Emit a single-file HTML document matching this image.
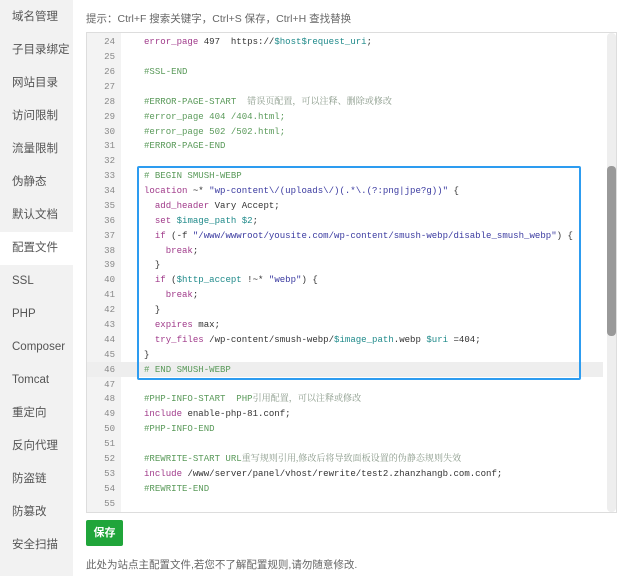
<!DOCTYPE html>
<html><head><meta charset="utf-8"><style>
*{margin:0;padding:0;box-sizing:border-box}
body{width:627px;height:576px;background:#fff;position:relative;overflow:hidden;font-family:"Liberation Sans","Noto Sans CJK SC",sans-serif;}
.side{position:absolute;left:0;top:0;width:73px;height:576px;background:#f2f2f2}
.side div{position:absolute;left:0;width:73px;height:33px;line-height:33px;padding-left:12px;font-size:11.5px;color:#555}
.side div.act{background:#fff}
.tip{position:absolute;left:86px;top:11px;font-size:10.5px;color:#666}
.ed{position:absolute;left:86px;top:32px;width:531px;height:481px;border:1px solid #ddd;background:#fff;overflow:hidden}
.gut{position:absolute;left:0;top:0;width:34px;height:100%;background:#f3f3f3}
.ln{position:absolute;left:0;width:520px;height:15px;font-family:"Liberation Mono",monospace;font-size:9.05px;line-height:15px;white-space:pre;color:#333}
.ln .n{position:absolute;left:0;width:28px;text-align:right;color:#888}
.ln .c{position:absolute;left:57px}
.hl{background:#eeeeee}
.cm{color:#5a9a5a}.kw{color:#a03a8a}.st{color:#3a3aa0}.va{color:#1f8a8a}.cn{color:#8a9a8a;font-family:"Liberation Serif","Noto Serif CJK SC",serif}
.box{position:absolute;left:50px;top:133px;width:444px;height:214px;border:2px solid #2d9cf0;border-radius:2px}
.sb{position:absolute;left:520px;top:0;width:9px;height:479px;background:#eee;border-radius:4px}
.th{position:absolute;left:520px;top:133px;width:9px;height:170px;background:#999;border-radius:4px}
.btn{position:absolute;left:86px;top:520px;width:37px;height:26px;background:#20a53a;color:#fff;font-size:11px;line-height:26px;text-align:center;border-radius:2px;font-weight:bold}
.foot{position:absolute;left:86px;top:557px;font-size:10.5px;color:#666}
</style></head><body>
<div class="side">
<div style="top:1px">域名管理</div><div style="top:34px">子目录绑定</div><div style="top:67px">网站目录</div><div style="top:100px">访问限制</div><div style="top:133px">流量限制</div><div style="top:166px">伪静态</div><div style="top:199px">默认文档</div><div class="act" style="top:232px;width:80px">配置文件</div><div style="top:265px">SSL</div><div style="top:298px">PHP</div><div style="top:331px">Composer</div><div style="top:364px">Tomcat</div><div style="top:397px">重定向</div><div style="top:430px">反向代理</div><div style="top:463px">防盗链</div><div style="top:496px">防篡改</div><div style="top:529px">安全扫描</div>
</div>
<div class="tip">提示：Ctrl+F 搜索关键字，Ctrl+S 保存，Ctrl+H 查找替换</div>
<div class="ed">
<div class="gut"></div>
<div class="ln" style="top:1px"><span class="n">24</span><span class="c"><span class="kw">error_page</span> 497  https://<span class="va">$host$request_uri</span>;</span></div>
<div class="ln" style="top:16px"><span class="n">25</span></div>
<div class="ln" style="top:31px"><span class="n">26</span><span class="c cm">#SSL-END</span></div>
<div class="ln" style="top:46px"><span class="n">27</span></div>
<div class="ln" style="top:61px"><span class="n">28</span><span class="c"><span class="cm">#ERROR-PAGE-START</span>  <span class="cn">错误页配置，可以注释、删除或修改</span></span></div>
<div class="ln" style="top:76px"><span class="n">29</span><span class="c cm">#error_page 404 /404.html;</span></div>
<div class="ln" style="top:91px"><span class="n">30</span><span class="c cm">#error_page 502 /502.html;</span></div>
<div class="ln" style="top:105px"><span class="n">31</span><span class="c cm">#ERROR-PAGE-END</span></div>
<div class="ln" style="top:120px"><span class="n">32</span></div>
<div class="ln" style="top:135px"><span class="n">33</span><span class="c cm"># BEGIN SMUSH-WEBP</span></div>
<div class="ln" style="top:150px"><span class="n">34</span><span class="c"><span class="kw">location</span> ~* <span class="st">"wp-content\/(uploads\/)(.*\.(?:png|jpe?g))"</span> {</span></div>
<div class="ln" style="top:165px"><span class="n">35</span><span class="c">  <span class="kw">add_header</span> Vary Accept;</span></div>
<div class="ln" style="top:180px"><span class="n">36</span><span class="c">  <span class="kw">set</span> <span class="va">$image_path $2</span>;</span></div>
<div class="ln" style="top:195px"><span class="n">37</span><span class="c">  <span class="kw">if</span> (-f <span class="st">"/www/wwwroot/yousite.com/wp-content/smush-webp/disable_smush_webp"</span>) {</span></div>
<div class="ln" style="top:210px"><span class="n">38</span><span class="c">    <span class="kw">break</span>;</span></div>
<div class="ln" style="top:224px"><span class="n">39</span><span class="c">  }</span></div>
<div class="ln" style="top:239px"><span class="n">40</span><span class="c">  <span class="kw">if</span> (<span class="va">$http_accept</span> !~* <span class="st">"webp"</span>) {</span></div>
<div class="ln" style="top:254px"><span class="n">41</span><span class="c">    <span class="kw">break</span>;</span></div>
<div class="ln" style="top:269px"><span class="n">42</span><span class="c">  }</span></div>
<div class="ln" style="top:284px"><span class="n">43</span><span class="c">  <span class="kw">expires</span> max;</span></div>
<div class="ln" style="top:299px"><span class="n">44</span><span class="c">  <span class="kw">try_files</span> /wp-content/smush-webp/<span class="va">$image_path</span>.webp <span class="va">$uri</span> =404;</span></div>
<div class="ln" style="top:314px"><span class="n">45</span><span class="c">}</span></div>
<div class="ln hl" style="top:329px;width:516px"><span class="n">46</span><span class="c cm"># END SMUSH-WEBP</span></div>
<div class="ln" style="top:344px"><span class="n">47</span></div>
<div class="ln" style="top:358px"><span class="n">48</span><span class="c"><span class="cm">#PHP-INFO-START  PHP</span><span class="cn">引用配置，可以注释或修改</span></span></div>
<div class="ln" style="top:373px"><span class="n">49</span><span class="c"><span class="kw">include</span> enable-php-81.conf;</span></div>
<div class="ln" style="top:388px"><span class="n">50</span><span class="c cm">#PHP-INFO-END</span></div>
<div class="ln" style="top:403px"><span class="n">51</span></div>
<div class="ln" style="top:418px"><span class="n">52</span><span class="c"><span class="cm">#REWRITE-START URL</span><span class="cn">重写规则引用,修改后将导致面板设置的伪静态规则失效</span></span></div>
<div class="ln" style="top:433px"><span class="n">53</span><span class="c"><span class="kw">include</span> /www/server/panel/vhost/rewrite/test2.zhanzhangb.com.conf;</span></div>
<div class="ln" style="top:448px"><span class="n">54</span><span class="c cm">#REWRITE-END</span></div>
<div class="ln" style="top:463px"><span class="n">55</span></div>
<div class="box"></div>
<div class="sb"></div><div class="th"></div>
</div>
<div class="btn">保存</div>
<div class="foot">此处为站点主配置文件,若您不了解配置规则,请勿随意修改.</div>
</body></html>
